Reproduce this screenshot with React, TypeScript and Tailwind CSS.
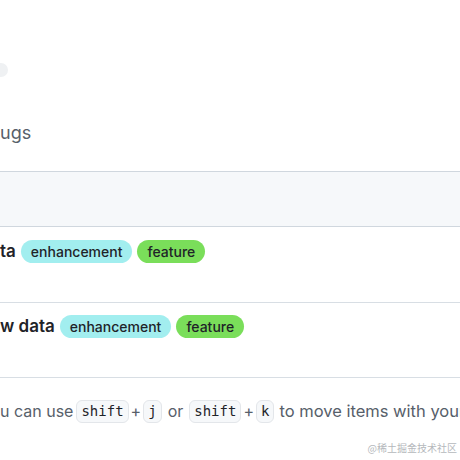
import React from "react";

function Badge({ label, tone }: { label: string; tone: "cyan" | "green" }) {
  const bg = tone === "cyan" ? "bg-[#a2eeef]" : "bg-[#7ade5a]";
  return (
    <span className={`inline-flex h-[23px] items-center rounded-full px-[10px] text-[14px] font-medium text-[#1f2328] ${bg}`}>
      {label}
    </span>
  );
}

function Kbd({ children }: { children: React.ReactNode }) {
  return (
    <kbd className="inline-flex h-[23px] items-center rounded-md border border-[#e3e6ea] bg-[#f6f8fa] px-[4px] font-['DejaVu_Sans_Mono',monospace] text-[14px] text-[#1f2328]">
      {children}
    </kbd>
  );
}

export default function App() {
  return (
    <div className="relative h-[460px] w-[460px] overflow-hidden bg-white font-['Inter',sans-serif]">
      {/* top pill */}
      <div className="pt-[63px]">
        <div className="ml-[-22px] h-[14px] w-[30px] rounded-full bg-[#eff1f3]" />
      </div>

      {/* subtitle */}
      <p className="mt-[44px] text-[18px] leading-[24px] text-[#57606a]">ugs</p>

      {/* table */}
      <div className="mt-[26px] border-t border-[#d0d7de]">
        <div className="h-[55px] border-b border-[#d0d7de] bg-[#f6f8fa]" />
        <div className="h-[76px] border-b border-[#d8dee4] pt-[12px]">
          <div className="flex items-center gap-[5px]">
            <span className="text-[17px] font-semibold text-[#1f2328]">ta</span>
            <Badge label="enhancement" tone="cyan" />
            <Badge label="feature" tone="green" />
          </div>
        </div>
        <div className="h-[75px] border-b border-[#d8dee4] pt-[11px]">
          <div className="flex items-center gap-[5px]">
            <span className="text-[17px] font-semibold text-[#1f2328]">w data</span>
            <Badge label="enhancement" tone="cyan" />
            <Badge label="feature" tone="green" />
          </div>
        </div>
      </div>

      {/* keyboard hint */}
      <div className="mt-[21px] flex items-center whitespace-nowrap text-[16px] text-[#57606a]">
        <span className="mr-[3px]">u can use</span>
        <Kbd>shift</Kbd>
        <span className="mx-[2px]">+</span>
        <Kbd>j</Kbd>
        <span className="mx-[6px]">or</span>
        <Kbd>shift</Kbd>
        <span className="mx-[2px]">+</span>
        <Kbd>k</Kbd>
        <span className="ml-[5px] text-[16.5px]">to move items with your keyboard.</span>
      </div>

      {/* watermark */}
      <span className="absolute bottom-[5px] right-[3px] font-['Noto_Sans_CJK_SC',sans-serif] text-[10px] text-[#b5b8bc]">
        @稀土掘金技术社区
      </span>
    </div>
  );
}
